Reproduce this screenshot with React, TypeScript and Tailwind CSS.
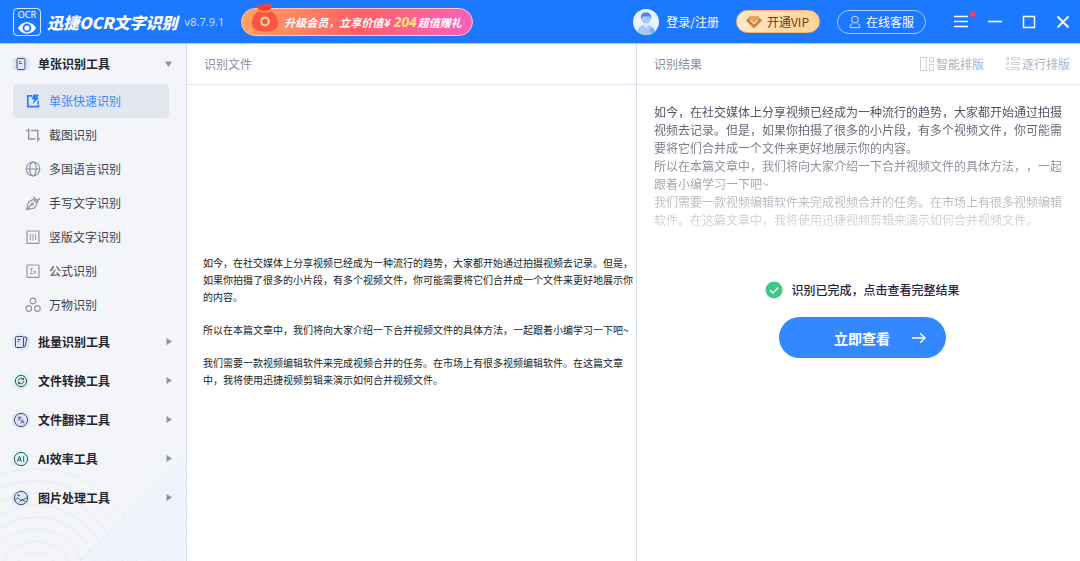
import type { ReactNode } from 'react'

type IconProps = { children: ReactNode; className?: string }

function Icon16({ children, className = '' }: IconProps) {
  return (
    <svg
      viewBox="0 0 16 16"
      className={`size-4 shrink-0 ${className}`}
      fill="none"
      stroke="currentColor"
      strokeWidth="1.2"
      aria-hidden="true"
    >
      {children}
    </svg>
  )
}

// Group icons share a soft hexagon behind the glyph
function HexIcon({ children, className = '' }: IconProps) {
  return (
    <svg viewBox="0 0 18 18" className={`size-[18px] shrink-0 ${className}`} fill="none" aria-hidden="true">
      <path
        d="M9 1.2 L16.6 4.8 V13.2 L9 16.8 L1.4 13.2 V4.8 Z"
        fill="currentColor"
        stroke="currentColor"
        strokeWidth="2"
        strokeLinejoin="round"
      />
      <g stroke="#4a4d68" strokeWidth="1">
        {children}
      </g>
    </svg>
  )
}

const tools = [
  {
    label: '单张快速识别',
    active: true,
    icon: (
      <Icon16>
        <path d="M7 2.8 H2.8 V13.6 H13.4 V11.4" strokeWidth="1.7" />
        <path d="M13.2 7.5 V11" strokeWidth="1.5" />
        <path d="M8.2 1.6 H14 L12 5 H14 L7.6 11 L9.2 6.6 H6.8 Z" fill="currentColor" stroke="none" />
      </Icon16>
    ),
  },
  {
    label: '截图识别',
    icon: (
      <Icon16>
        <path d="M1 3.5 H4.5 M3.7 1.5 V12 H10.5 M5.8 3.5 H12.8 V14.5 M12 12 H15" strokeWidth="1.4" />
      </Icon16>
    ),
  },
  {
    label: '多国语言识别',
    icon: (
      <Icon16>
        <circle cx="8" cy="8" r="6.8" />
        <ellipse cx="8" cy="8" rx="3.2" ry="6.8" />
        <path d="M1.2 8 H14.8" />
      </Icon16>
    ),
  },
  {
    label: '手写文字识别',
    icon: (
      <Icon16>
        <path d="M1.6 14.6 L3.6 6.8 L8.4 4.4 L12 8.4 L10 12.8 Z M1.6 14.6 L6.6 9.6" strokeLinejoin="round" />
        <circle cx="7.3" cy="9" r="1.1" />
        <path d="M8.4 1.8 L13.4 7.6 M12 5.4 L15 3.6" strokeWidth="1.5" />
      </Icon16>
    ),
  },
  {
    label: '竖版文字识别',
    icon: (
      <Icon16>
        <rect x="2" y="2" width="12" height="12.4" rx="0.6" />
        <path d="M5.4 5 V11.5 M8 5 V11.5 M10.6 5 V11" strokeWidth="1" />
      </Icon16>
    ),
  },
  {
    label: '公式识别',
    icon: (
      <Icon16>
        <rect x="2" y="2" width="12" height="12.4" rx="0.6" />
        <path d="M8 5.6 H5.2 L7 8.2 L5.2 10.8 H8 M8.6 7.6 L11 10.8 M11 7.6 L8.6 10.8" strokeWidth="0.9" />
      </Icon16>
    ),
  },
  {
    label: '万物识别',
    icon: (
      <Icon16>
        <circle cx="8" cy="4" r="2.8" />
        <circle cx="3.8" cy="11.5" r="2.8" />
        <circle cx="12.4" cy="11.5" r="2.8" />
      </Icon16>
    ),
  },
]

const groups = [
  {
    label: '批量识别工具',
    icon: (
      <HexIcon className="text-[#dce8fe]">
        <rect x="3.5" y="3.5" width="8" height="11" rx="1" />
        <path d="M12 3.8 L15 4.8 L13 13.6 H11.6 M5.6 6.5 H8.4 M5.6 8.5 H7.2" />
      </HexIcon>
    ),
  },
  {
    label: '文件转换工具',
    icon: (
      <HexIcon className="text-[#d5f8e8]">
        <circle cx="9" cy="9" r="5.6" />
        <path d="M6.2 8.8 A2.9 2.9 0 0 1 11.4 7.4 M11.6 5.8 V7.8 H9.8 M11.8 9.2 A2.9 2.9 0 0 1 6.6 10.6 M6.4 12.2 V10.2 H8.2" />
      </HexIcon>
    ),
  },
  {
    label: '文件翻译工具',
    icon: (
      <HexIcon className="text-[#dde4fd]">
        <circle cx="9" cy="9" r="6.6" />
        <path
          d="M5.8 6.4 H9.6 M7.6 5.4 V6.4 M9 6.4 L5.8 9.8 M6.4 7.2 L8.8 9.6 M8.8 12.4 L10.4 8.6 L12.2 12.4 M9.6 11.2 H11.6"
          strokeWidth="0.8"
        />
      </HexIcon>
    ),
  },
  {
    label: 'AI效率工具',
    icon: (
      <HexIcon className="text-[#d5f7f3]">
        <circle cx="9" cy="9" r="6.6" />
        <path d="M5.4 11.6 L7.4 6.4 L9.4 11.6 M6.2 10 H8.6 M11.6 6.2 V11.8" />
      </HexIcon>
    ),
  },
  {
    label: '图片处理工具',
    icon: (
      <HexIcon className="text-[#dbe6fe]">
        <circle cx="9" cy="9" r="6.6" />
        <path d="M2.8 11.4 C4.4 8.8 6.2 8.8 7.8 10.4 S11.4 11 15.2 8.4 M7.6 12.6 L10.6 10.8 L13.4 12.8" />
        <circle cx="6.6" cy="6.4" r="0.6" fill="#4a4d68" />
      </HexIcon>
    ),
  },
]

function SidebarPattern() {
  return (
    <svg
      viewBox="0 0 186 120"
      className="pointer-events-none absolute bottom-0 left-0 w-full"
      fill="none"
      stroke="#e4ebf8"
      aria-hidden="true"
    >
      {[24, 36, 48, 60, 72, 84, 96, 108].map((r) => (
        <circle key={r} cx="36" cy="136" r={r} />
      ))}
      <path d="M186 14 L80 120 H186 Z" fill="#eff3fc" stroke="none" />
      <path d="M186 -6 L136 44 M186 14 L80 120 M186 28 L94 120 M186 42 L108 120 M186 56 L122 120 M186 70 L136 120 M186 84 L150 120 M186 98 L164 120" />
    </svg>
  )
}

function Sidebar() {
  return (
    <nav className="relative w-[187px] shrink-0 border-r border-[#d9dfed] bg-[#f3f5f9]">
      <SidebarPattern />
      <div className="relative">
        <button className="flex h-10 w-full items-center gap-2 pr-3.5 pl-3 text-left font-bold">
          <HexIcon className="text-[#dce8fe]">
            <rect x="5" y="3.5" width="8" height="11" rx="1.2" />
            <path d="M7 6.5 H8.6 M7 8.5 H9.8" />
          </HexIcon>
          <span className="flex-1">单张识别工具</span>
          <svg viewBox="0 0 7 6" className="h-1.5 w-[7px]" fill="#8f92a3" aria-hidden="true">
            <path d="M0 0.5 H7 L3.5 6 Z" />
          </svg>
        </button>
        <ul>
          {tools.map((tool) => (
            <li key={tool.label} className="pr-[17px] pl-[13px]">
              <button
                className={`flex h-[34px] w-full items-center gap-2 rounded-sm pl-3 text-left ${
                  tool.active ? 'bg-[#e3e6ef] text-[#3388ff]' : 'text-[#3c3f55]'
                }`}
              >
                <span className={tool.active ? 'text-[#2680ff]' : 'text-[#9193a8]'}>{tool.icon}</span>
                {tool.label}
              </button>
            </li>
          ))}
        </ul>
        {groups.map((group) => (
          <button
            key={group.label}
            className="flex h-[39px] w-full items-center gap-2 pr-3.5 pl-3 text-left font-bold"
          >
            {group.icon}
            <span className="flex-1">{group.label}</span>
            <svg viewBox="0 0 6 7" className="h-[7px] w-1.5" fill="#8f92a3" aria-hidden="true">
              <path d="M0.5 0 L6 3.5 L0.5 7 Z" />
            </svg>
          </button>
        ))}
      </div>
    </nav>
  )
}

function Logo() {
  return (
    <div className="flex size-7 shrink-0 flex-col items-center rounded border border-white/80">
      <span className="font-['Noto_Sans'] text-[9px] leading-[12px]">OCR</span>
      <svg viewBox="0 0 20 14" className="h-3.5 w-5 shrink-0" aria-hidden="true">
        <path d="M1 7 C5 -0.6 15 -0.6 19 7 C15 14.6 5 14.6 1 7 Z" fill="#fff" />
        <circle cx="10" cy="7" r="4.4" fill="#1b78ff" />
        <circle cx="10" cy="7" r="2.6" fill="#fff" />
      </svg>
    </div>
  )
}

function Promo() {
  return (
    <a
      href="#vip"
      className="relative ml-[17px] flex h-7 w-[232px] shrink-0 items-center rounded-full border border-[#ffc9a8] bg-linear-to-r from-[#ffa25e] via-[#ff5f68] to-[#fb5fc0] pl-[42px] text-[11px] font-bold whitespace-nowrap italic"
    >
      {/* lucky bag sticks out above the pill */}
      <svg viewBox="0 0 30 30" className="absolute -top-1.5 left-2 size-[30px]" aria-hidden="true">
        <path d="M6 2.5 C9 0.5 12 2.5 15 1.2 C18 0 20 1 22 2.5 L19.6 8.6 H9.6 Z" fill="#f8402f" />
        <path d="M10 7 C4 10 1.5 16 2 21 C2.6 27 8 28.5 15 28.5 C22 28.5 28 27 28 21 C28.4 16 25 10 20 7 Z" fill="#fb5443" />
        <path d="M8.5 7.2 C13 9.4 17 9.4 21.5 7.2" fill="none" stroke="#ff9a4c" strokeWidth="1.6" />
        <circle cx="15" cy="18.5" r="3.8" fill="none" stroke="#ffd29a" strokeWidth="2.2" />
      </svg>
      <span>升级会员，立享价值¥</span>
      <span className="mr-px ml-1 font-['Open_Sans'] text-[14px] text-[#ffe37a]">204</span>
      <span>超值赠礼</span>
    </a>
  )
}

function TitleBar() {
  return (
    <header className="flex h-11 items-center border-b border-[#a9cbff] bg-[#1b78ff] pr-2.5 pl-[13px] text-white">
      <Logo />
      <h1 className="ml-1.5 text-[16px] font-black whitespace-nowrap italic">迅捷OCR文字识别</h1>
      <span className="ml-[7px] font-['Noto_Sans'] text-[11px] text-white/75">v8.7.9.1</span>
      <Promo />
      <div className="ml-auto flex shrink-0 items-center whitespace-nowrap">
        <button className="flex items-center gap-[7px]">
          <svg viewBox="0 0 26 26" className="size-[26px]" aria-hidden="true">
            <circle cx="13" cy="13" r="13" fill="#e9f2ff" />
            <path d="M4.5 23 C5 17.5 8.5 16 13 16 C17.5 16 21 17.5 21.5 23 C16 27 10 27 4.5 23 Z" fill="#a7c8fa" />
            <path d="M10.8 13 H15.2 V17 L13 19 L10.8 17 Z" fill="#dfebfd" />
            <circle cx="13" cy="10" r="4.6" fill="#a9c9fa" />
            <path d="M8 10 C7.4 4.8 10 3.2 13.4 3.4 C17 3.4 18.8 6 17.8 10 L16.6 7.6 H10 Z" fill="#4b8ae8" />
            <circle cx="19" cy="21.5" r="2.4" fill="#78abf5" />
          </svg>
          登录/注册
        </button>
        <button className="ml-[17px] flex h-[23px] items-center gap-1 rounded-full border border-[#f7b56e] bg-linear-to-r from-[#ffe8c8] to-[#ffd199] pr-2.5 pl-2 text-[#6b3a12]">
          <svg viewBox="0 0 18 16" className="h-4 w-[18px]" aria-hidden="true">
            <path d="M4.5 2.5 H13.5 L17 6.6 L9 14.5 L1 6.6 Z" fill="#cc8136" />
            <path d="M4.5 2.5 H13.5 L15 4.4 L9 9 L3 4.4 Z" fill="#e3a45e" />
            <path d="M5.4 6.4 L9 9.6 L12.6 6.4" fill="none" stroke="#fff0d8" strokeWidth="1.2" />
          </svg>
          开通VIP
        </button>
        <button className="ml-[17px] flex h-6 items-center gap-1 rounded-full border border-white/60 pr-[11px] pl-2.5">
          <svg viewBox="0 0 14 14" className="size-3.5" fill="none" stroke="#cfe1ff" aria-hidden="true">
            <circle cx="7" cy="4.6" r="3.4" />
            <path d="M4.6 8.4 C2.8 9 2 10.6 2 12.6 H12 C12 10.6 11.2 9 9.4 8.4" />
          </svg>
          在线客服
        </button>
        <button aria-label="菜单" className="relative ml-7">
          <svg viewBox="0 0 14 14" className="size-3.5" stroke="#fff" strokeWidth="1.6" aria-hidden="true">
            <path d="M0 1.5 H14 M0 6.5 H14 M0 11.5 H14" />
          </svg>
          <span className="absolute -top-1 -right-2 size-1.5 rounded-full bg-[#ff3b4e]" />
        </button>
        <button aria-label="最小化" className="ml-5">
          <svg viewBox="0 0 14 14" className="size-3.5" stroke="#fff" strokeWidth="1.6" aria-hidden="true">
            <path d="M0 6.5 H14" />
          </svg>
        </button>
        <button aria-label="最大化" className="ml-5">
          <svg viewBox="0 0 14 14" className="size-3.5" fill="none" stroke="#fff" strokeWidth="1.5" aria-hidden="true">
            <rect x="1.5" y="1.5" width="11" height="11" />
          </svg>
        </button>
        <button aria-label="关闭" className="ml-5">
          <svg viewBox="0 0 14 14" className="size-3.5" stroke="#fff" strokeWidth="1.8" aria-hidden="true">
            <path d="M1.5 1.5 L12.5 12.5 M12.5 1.5 L1.5 12.5" />
          </svg>
        </button>
      </div>
    </header>
  )
}

function SourcePanel() {
  return (
    <section className="flex min-w-0 flex-col border-r border-[#dbe1ec]">
      <h2 className="flex h-[41px] items-center border-b border-[#e0e5ef] pl-[17px] text-[#8a8ca0]">识别文件</h2>
      <article className="flex flex-1 flex-col justify-center gap-4 pb-1 pl-4 text-[10px] leading-[17px] text-[#222]">
        <p>
          如今，在社交媒体上分享视频已经成为一种流行的趋势，大家都开始通过拍摄视频去记录。但是，如果你拍摄了很多的小片段，有多个视频文件，你可能需要将它们合并成一个文件来更好地展示你的内容。
        </p>
        <p>所以在本篇文章中，我们将向大家介绍一下合并视频文件的具体方法，一起跟着小编学习一下吧~</p>
        <p>
          我们需要一款视频编辑软件来完成视频合并的任务。在市场上有很多视频编辑软件。在这篇文章中，我将使用迅捷视频剪辑来演示如何合并视频文件。
        </p>
      </article>
    </section>
  )
}

function ResultPanel() {
  return (
    <section className="flex min-w-0 flex-col">
      <div className="flex h-[41px] items-center border-b border-[#e0e5ef] pr-2.5 pl-[17px]">
        <h2 className="flex-1 text-[#8a8ca0]">识别结果</h2>
        <button className="flex items-center gap-0.5 text-[#a9b4c8]">
          <svg viewBox="0 0 14 14" className="size-3.5" fill="none" stroke="#cfd3da" aria-hidden="true">
            <rect x="0.5" y="0.5" width="6" height="13" />
            <rect x="9.5" y="0.5" width="4" height="4" />
            <rect x="9.5" y="7.5" width="4" height="6" />
          </svg>
          智能排版
        </button>
        <button className="ml-[22px] flex items-center gap-0.5 text-[#a9b4c8]">
          <svg viewBox="0 0 14 14" className="size-3.5" fill="none" stroke="#cfd3da" aria-hidden="true">
            <path d="M0.5 0.5 h2 v2 h-2 Z M0.5 5.5 h2 v2 h-2 Z M0.5 10.5 h2 v2 h-2 Z M5.5 0.5 h8 v2 h-8 Z M5.5 5.5 h8 v2 h-8 Z M5.5 10.5 h8 v2 h-8 Z" />
          </svg>
          逐行排版
        </button>
      </div>
      {/* preview text fades out towards the unlock button */}
      <div className="pt-[18px] pr-4 pl-[17px] leading-[18px] text-[#4b4d60] [mask-image:linear-gradient(180deg,#000_15%,rgba(0,0,0,0.2)_100%)]">
        <p>
          如今，在社交媒体上分享视频已经成为一种流行的趋势，大家都开始通过拍摄视频去记录。但是，如果你拍摄了很多的小片段，有多个视频文件，你可能需要将它们合并成一个文件来更好地展示你的内容。
        </p>
        <p>所以在本篇文章中，我们将向大家介绍一下合并视频文件的具体方法，，一起跟着小编学习一下吧~</p>
        <p>
          我们需要一款视频编辑软件来完成视频合并的任务。在市场上有很多视频编辑软件。在这篇文章中，我将使用迅捷视频剪辑来演示如何合并视频文件。
        </p>
      </div>
      <div className="mt-[52px] flex flex-col items-center gap-[18px] pb-8 pl-2">
        <p className="flex items-center gap-2 font-medium text-[#23243f]">
          <svg viewBox="0 0 18 18" className="size-[18px]" fill="none" aria-hidden="true">
            <circle cx="9" cy="9" r="8.5" fill="#3fca83" />
            <path d="M5 9.2 L8 12 L13.2 6.6" stroke="#fff" strokeWidth="1.5" />
          </svg>
          识别已完成，点击查看完整结果
        </p>
        <button className="flex h-[41px] w-[167px] items-center justify-end gap-[22px] rounded-full bg-[#3388ff] pr-5 text-[14px] font-bold text-white">
          立即查看
          <svg viewBox="0 0 14 14" className="size-3.5" fill="none" stroke="#fff" strokeWidth="1.4" aria-hidden="true">
            <path d="M0 7 H13 M8.2 2.2 L13 7 L8.2 11.8" />
          </svg>
        </button>
      </div>
    </section>
  )
}

export default function App() {
  return (
    <div className="flex min-h-screen flex-col bg-white font-['Noto_Sans_CJK_SC',sans-serif] text-[12px] leading-[18px] text-[#22242f] [text-spacing-trim:space-all]">
      <TitleBar />
      <div className="flex flex-1">
        <Sidebar />
        <main className="grid flex-1 grid-cols-[450fr_443fr]">
          <SourcePanel />
          <ResultPanel />
        </main>
      </div>
    </div>
  )
}
